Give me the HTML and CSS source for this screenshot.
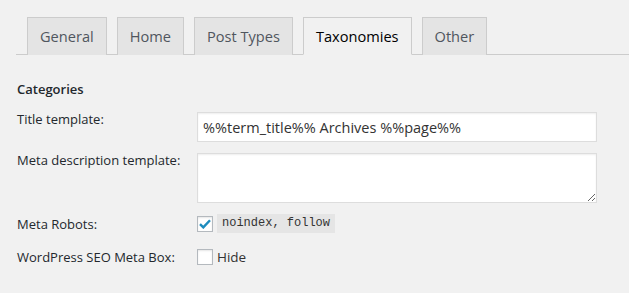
FILE: index.html
```html
<!DOCTYPE html>
<html lang="en">
<head>
    <meta charset="UTF-8">
    <title>Titles &amp; Metas - Taxonomies</title>
    <link rel="stylesheet" href="styles.css">
</head>
<body>
    <h2 class="nav-tab-wrapper">
        <a class="nav-tab" href="#general">General</a>
        <a class="nav-tab" href="#home">Home</a>
        <a class="nav-tab" href="#post-types">Post Types</a>
        <a class="nav-tab nav-tab-active" href="#taxonomies">Taxonomies</a>
        <a class="nav-tab" href="#other">Other</a>
    </h2>

    <div class="tab-panel">
        <h4 class="section-title">Categories</h4>

        <div class="form-row">
            <label class="form-label" for="title-category">Title template:</label>
            <input type="text" id="title-category" class="text-field" value="%%term_title%% Archives %%page%%">
        </div>

        <div class="form-row">
            <label class="form-label" for="metadesc-category">Meta description template:</label>
            <textarea id="metadesc-category" class="text-area"></textarea>
        </div>

        <div class="form-row form-row-check">
            <span class="form-label">Meta Robots:</span>
            <label class="check">
                <span class="checkbox checked">
                    <svg width="12" height="10" viewBox="0 0 12 10"><path d="M1 5.2 L4.3 8.4 L11 1.2" fill="none" stroke="#1e8cbe" stroke-width="2.4"/></svg>
                </span>
                <code>noindex, follow</code>
            </label>
        </div>

        <div class="form-row form-row-check">
            <span class="form-label">WordPress SEO Meta Box:</span>
            <label class="check">
                <span class="checkbox"></span>
                <span class="check-text">Hide</span>
            </label>
        </div>
    </div>
</body>
</html>
```

FILE: styles.css
```css
* {
    margin: 0;
    padding: 0;
    box-sizing: border-box;
}

body {
    font-family: 'Open Sans', 'Noto Sans', Arial, sans-serif;
    font-size: 13px;
    color: #444;
    background: #f1f1f1;
}

.nav-tab-wrapper {
    display: flex;
    gap: 10px;
    margin-left: 16px;
    padding: 17px 0 0 11px;
    border-bottom: 1px solid #ccc;
    font-size: 14.6px;
    font-weight: 400;
    line-height: 24px;
}

.nav-tab {
    display: block;
    margin-bottom: -1px;
    padding: 6px 12px;
    background: #e4e4e4;
    border: 1px solid #ccc;
    border-bottom: none;
    color: #50565e;
    text-decoration: none;
}

.nav-tab-active {
    background: #f1f1f1;
    color: #000;
    border-bottom: 1px solid #f1f1f1;
}

.tab-panel {
    padding: 25px 0 0 17px;
}

.section-title {
    font-size: 13px;
    font-weight: 600;
    color: #23282d;
    margin-bottom: 14px;
}

.form-row {
    display: grid;
    grid-template-columns: 180px 400px;
    margin-bottom: 11px;
}

.form-label {
    color: #23282d;
    margin-top: -2px;
}

.text-field {
    height: 30px;
    padding: 0 5px;
    border: 1px solid #ddd;
    background: #fff;
    font-family: 'Open Sans', 'Noto Sans', Arial, sans-serif;
    font-size: 14.5px;
    color: #333;
    box-shadow: inset 0 1px 2px rgba(0, 0, 0, 0.07);
}

.text-area {
    height: 50px;
    border: 1px solid #ddd;
    background: #fff;
    resize: vertical;
    box-shadow: inset 0 1px 2px rgba(0, 0, 0, 0.07);
}

.form-row-check {
    align-items: center;
    margin-bottom: 15px;
}

.form-row-check .form-label {
    margin-top: 0;
}

.check {
    display: flex;
    align-items: center;
    gap: 4px;
}

.checkbox {
    width: 16px;
    height: 16px;
    border: 1px solid #b4b9be;
    background: #fff;
    box-shadow: inset 0 1px 2px rgba(0, 0, 0, 0.1);
    display: flex;
    align-items: center;
    justify-content: center;
}

code {
    font-family: 'Liberation Mono', 'DejaVu Sans Mono', monospace;
    font-size: 12px;
    color: #333;
    background: #e5e5e5;
    padding: 2px 5px 2px;
    line-height: 15px;
}

.check-text {
    font-size: 13.5px;
    color: #333;
}
```
